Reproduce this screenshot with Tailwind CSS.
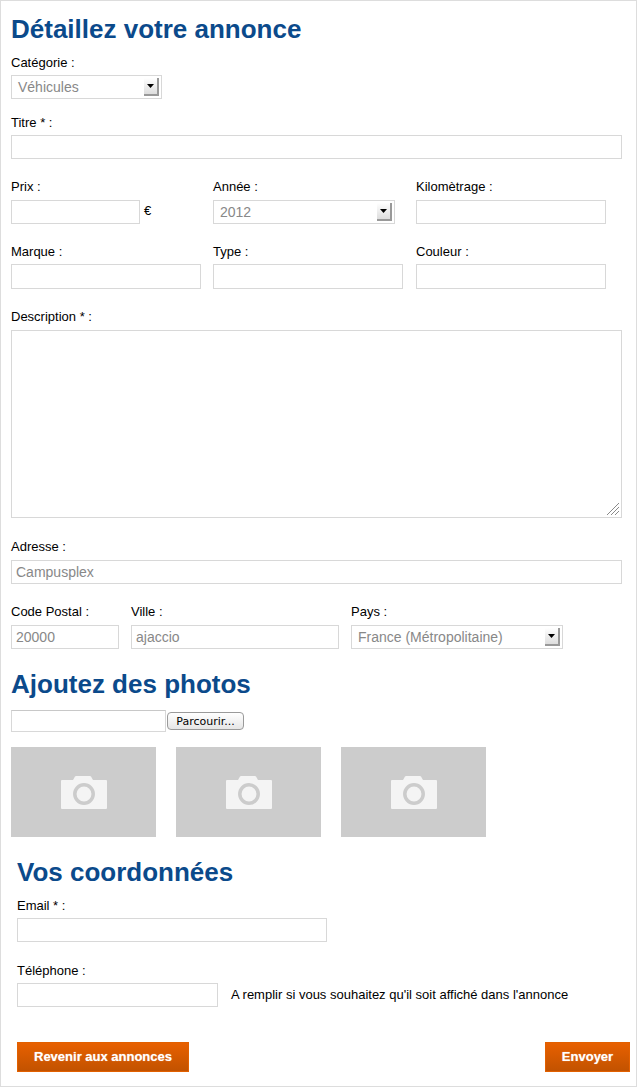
<!DOCTYPE html>
<html lang="fr">
<head>
  <meta charset="UTF-8">
  <title>Détaillez votre annonce</title>
  <script src="https://cdn.jsdelivr.net/npm/@tailwindcss/browser@4"></script>
</head>
<body class="bg-white font-['Liberation_Sans',Arial,sans-serif] text-[13px] text-black">
  <form class="w-[637px] h-[1087px] border border-[#dddddd] pl-[10px] pt-[13px] box-border">
    <!-- Annonce -->
    <h1 class="text-[26px] leading-[30px] font-bold text-[#0b4a8b] mb-[11px]">Détaillez votre annonce</h1>

    <label class="block leading-[15px] mb-[5px]">Catégorie :</label>
    <div class="w-[151px] h-[24px] border border-[#d8d8d8] flex items-center justify-between pl-[6px] pr-[2px] text-[14px] text-[#888888]">
      <span>Véhicules</span>
      <span class="w-[15px] h-[18px] bg-gradient-to-b from-white to-[#dddddd] border-r-2 border-b-2 border-[#999999] flex items-center justify-center">
        <svg width="7" height="4" viewBox="0 0 7 4"><path d="M0 0h7L3.5 4z" fill="#000"/></svg>
      </span>
    </div>

    <label class="block leading-[15px] mt-[16px] mb-[5px]">Titre * :</label>
    <input type="text" class="block w-[611px] h-[24px] border border-[#d8d8d8]">

    <div class="flex mt-[20px]">
      <div class="w-[202px]">
        <label class="block leading-[15px] mb-[6px]">Prix :</label>
        <div class="flex">
          <input type="text" class="block w-[129px] h-[24px] border border-[#d8d8d8]">
          <span class="ml-[4px] leading-[22px]">€</span>
        </div>
      </div>
      <div class="w-[203px]">
        <label class="block leading-[15px] mb-[6px]">Année :</label>
        <div class="w-[182px] h-[24px] border border-[#d8d8d8] flex items-center justify-between pl-[6px] pr-[2px] text-[14px] text-[#888888]">
          <span>2012</span>
          <span class="w-[15px] h-[18px] bg-gradient-to-b from-white to-[#dddddd] border-r-2 border-b-2 border-[#999999] flex items-center justify-center">
            <svg width="7" height="4" viewBox="0 0 7 4"><path d="M0 0h7L3.5 4z" fill="#000"/></svg>
          </span>
        </div>
      </div>
      <div>
        <label class="block leading-[15px] mb-[6px]">Kilomètrage :</label>
        <input type="text" class="block w-[190px] h-[24px] border border-[#d8d8d8]">
      </div>
    </div>

    <div class="flex mt-[20px]">
      <div class="w-[202px]">
        <label class="block leading-[15px] mb-[5px]">Marque :</label>
        <input type="text" class="block w-[190px] h-[25px] border border-[#d8d8d8]">
      </div>
      <div class="w-[203px]">
        <label class="block leading-[15px] mb-[5px]">Type :</label>
        <input type="text" class="block w-[190px] h-[25px] border border-[#d8d8d8]">
      </div>
      <div>
        <label class="block leading-[15px] mb-[5px]">Couleur :</label>
        <input type="text" class="block w-[190px] h-[25px] border border-[#d8d8d8]">
      </div>
    </div>

    <label class="block leading-[15px] mt-[20px] mb-[6px]">Description * :</label>
    <div class="relative w-[611px]">
      <textarea class="block w-full h-[188px] border border-[#d8d8d8] resize-none"></textarea>
      <svg class="absolute right-[3px] bottom-[3px]" width="12" height="12" viewBox="0 0 12 12" fill="none" stroke="#8a8a8a" stroke-width="1"><path d="M0 12L12 0M4 12L12 4M8 12L12 8"/></svg>
    </div>

    <label class="block leading-[15px] mt-[21px] mb-[6px]">Adresse :</label>
    <input type="text" value="Campusplex" class="block w-[611px] h-[24px] border border-[#d8d8d8] px-[4px] text-[14px] text-[#888888]">

    <div class="flex mt-[20px]">
      <div class="w-[120px]">
        <label class="block leading-[15px] mb-[6px]">Code Postal :</label>
        <input type="text" value="20000" class="block w-[108px] h-[24px] border border-[#d8d8d8] px-[4px] text-[14px] text-[#888888]">
      </div>
      <div class="w-[220px]">
        <label class="block leading-[15px] mb-[6px]">Ville :</label>
        <input type="text" value="ajaccio" class="block w-[208px] h-[24px] border border-[#d8d8d8] px-[4px] text-[14px] text-[#888888]">
      </div>
      <div>
        <label class="block leading-[15px] mb-[6px]">Pays :</label>
        <div class="w-[212px] h-[24px] border border-[#d8d8d8] flex items-center justify-between pl-[6px] pr-[2px] text-[14px] text-[#888888]">
          <span>France (Métropolitaine)</span>
          <span class="w-[15px] h-[18px] bg-gradient-to-b from-white to-[#dddddd] border-r-2 border-b-2 border-[#999999] flex items-center justify-center">
            <svg width="7" height="4" viewBox="0 0 7 4"><path d="M0 0h7L3.5 4z" fill="#000"/></svg>
          </span>
        </div>
      </div>
    </div>

    <!-- Photos -->
    <h2 class="text-[26px] leading-[30px] font-bold text-[#0b4a8b] mt-[20px] mb-[11px]">Ajoutez des photos</h2>
    <div class="flex items-center">
      <input type="text" class="block w-[155px] h-[22px] border border-[#d8d8d8] border-t-[#c8c8c8]">
      <button type="button" class="ml-px w-[77px] h-[18px] border border-[#9a9a9a] rounded-[4px] bg-gradient-to-b from-white to-[#e6e6e6] text-[11px] leading-[15px] font-['DejaVu_Sans',sans-serif]">Parcourir...</button>
    </div>

    <div class="flex gap-[20px] mt-[15px]">
      <div class="w-[145px] h-[90px] bg-[#cccccc] flex items-center justify-center">
        <svg width="46" height="33" viewBox="0 0 46 33"><path d="M0 5a1 1 0 0 1 1-1h11l2-3.500q.5-.5 1-.5h14q.5 0 1 .5l2 3.500h13a1 1 0 0 1 1 1v27a1 1 0 0 1-1 1H1a1 1 0 0 1-1-1z" fill="#f4f4f4"/><circle cx="23" cy="18" r="9.200" fill="none" stroke="#cccccc" stroke-width="3.500"/></svg>
      </div>
      <div class="w-[145px] h-[90px] bg-[#cccccc] flex items-center justify-center">
        <svg width="46" height="33" viewBox="0 0 46 33"><path d="M0 5a1 1 0 0 1 1-1h11l2-3.500q.5-.5 1-.5h14q.5 0 1 .5l2 3.500h13a1 1 0 0 1 1 1v27a1 1 0 0 1-1 1H1a1 1 0 0 1-1-1z" fill="#f4f4f4"/><circle cx="23" cy="18" r="9.200" fill="none" stroke="#cccccc" stroke-width="3.500"/></svg>
      </div>
      <div class="w-[145px] h-[90px] bg-[#cccccc] flex items-center justify-center">
        <svg width="46" height="33" viewBox="0 0 46 33"><path d="M0 5a1 1 0 0 1 1-1h11l2-3.500q.5-.5 1-.5h14q.5 0 1 .5l2 3.500h13a1 1 0 0 1 1 1v27a1 1 0 0 1-1 1H1a1 1 0 0 1-1-1z" fill="#f4f4f4"/><circle cx="23" cy="18" r="9.200" fill="none" stroke="#cccccc" stroke-width="3.500"/></svg>
      </div>
    </div>

    <!-- Coordonnées -->
    <div class="pl-[6px]">
      <h2 class="text-[26px] leading-[30px] font-bold text-[#0b4a8b] mt-[20px] mb-[11px]">Vos coordonnées</h2>
      <label class="block leading-[15px] mb-[5px]">Email * :</label>
      <input type="text" class="block w-[310px] h-[24px] border border-[#d8d8d8]">

      <label class="block leading-[15px] mt-[21px] mb-[5px]">Téléphone :</label>
      <div class="flex items-center">
        <input type="text" class="block w-[201px] h-[24px] border border-[#d8d8d8]">
        <span class="ml-[13px]">A remplir si vous souhaitez qu'il soit affiché dans l'annonce</span>
      </div>

      <div class="flex justify-between w-[613px] mt-[35px]">
        <button type="button" class="w-[172px] h-[30px] border border-[#e26000] bg-gradient-to-b from-[#e86000] to-[#c25200] text-white font-bold text-[13px] [text-shadow:0_0_1px_rgba(255,255,255,0.6)]">Revenir aux annonces</button>
        <button type="button" class="w-[85px] h-[30px] border border-[#e26000] bg-gradient-to-b from-[#e86000] to-[#c25200] text-white font-bold text-[13px] [text-shadow:0_0_1px_rgba(255,255,255,0.6)]">Envoyer</button>
      </div>
    </div>
  </form>
</body>
</html>
